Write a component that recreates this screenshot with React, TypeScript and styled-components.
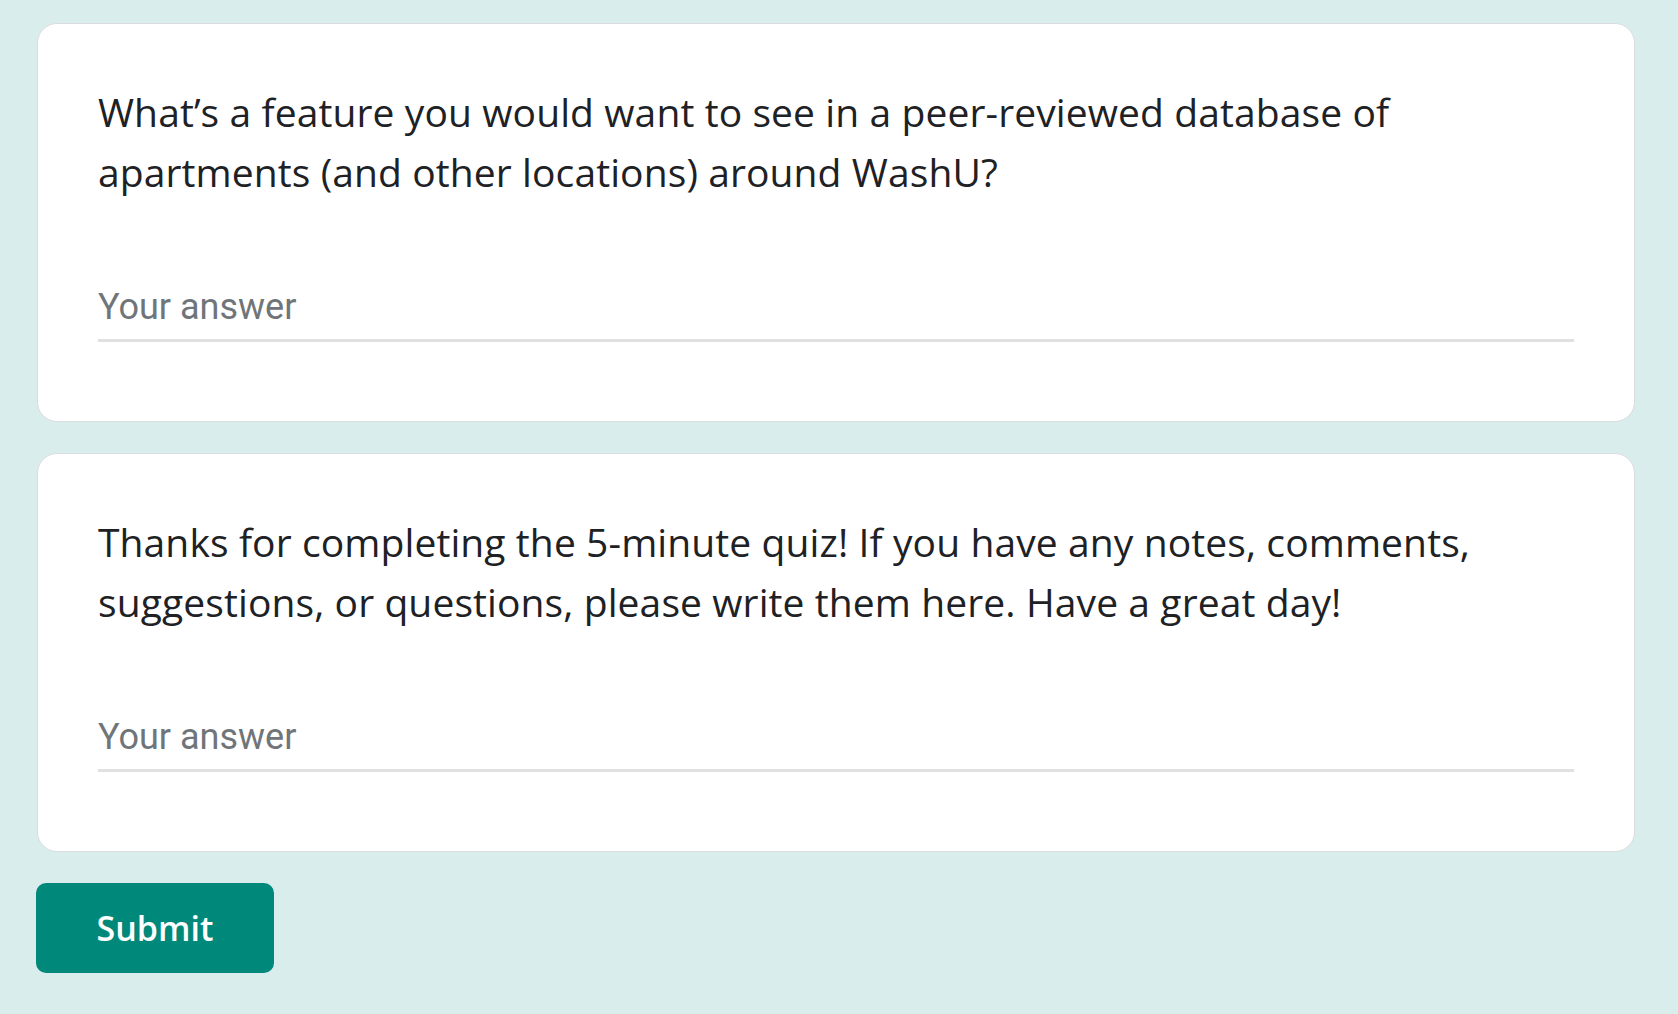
import React from "react";
import styled, { createGlobalStyle } from "styled-components";

const Global = createGlobalStyle`
  html, body { margin: 0; padding: 0; background: #d9eeec; }
  body { font-family: "Open Sans", sans-serif; }
`;

const Page = styled.div`
  min-height: 1014px;
  background: #d9eeec;
  padding: 23px 0 0 37px;
  box-sizing: border-box;
  display: flex;
  flex-direction: column;
  gap: 31px;
  width: 1635px;
`;

const Card = styled.section`
  background: #ffffff;
  border: 1px solid #dadce0;
  border-radius: 20px;
  padding: 58px 60px 79px;
  box-sizing: border-box;
  width: 1598px;
`;

const Title = styled.div`
  font-family: "Open Sans", sans-serif;
  font-size: 39px;
  line-height: 60px;
  color: #202124;
  letter-spacing: 0.1px;
`;

const Field = styled.div`
  margin-top: 80px;
  padding-bottom: 7px;
  border-bottom: 3px solid #e0e0e0;
  font-family: Roboto, sans-serif;
  font-size: 36px;
  line-height: 50px;
  color: #70757a;
`;

const SubmitButton = styled.button`
  width: 238px;
  height: 90px;
  margin-left: -1px;
  border: none;
  border-radius: 10px;
  background: #00897b;
  color: #ffffff;
  font-family: "Open Sans", sans-serif;
  font-weight: 600;
  font-size: 34px;
  padding: 0;
  cursor: pointer;
`;

const questions = [
  "What\u2019s a feature you would want to see in a peer-reviewed database of apartments (and other locations) around WashU?",
  "Thanks for completing the 5-minute quiz! If you have any notes, comments, suggestions, or questions, please write them here. Have a great day!",
];

export default function App() {
  return (
    <>
      <Global />
      <Page>
        {questions.map((q) => (
          <Card key={q}>
            <Title>{q}</Title>
            <Field>Your answer</Field>
          </Card>
        ))}
        <div>
          <SubmitButton>Submit</SubmitButton>
        </div>
      </Page>
    </>
  );
}
